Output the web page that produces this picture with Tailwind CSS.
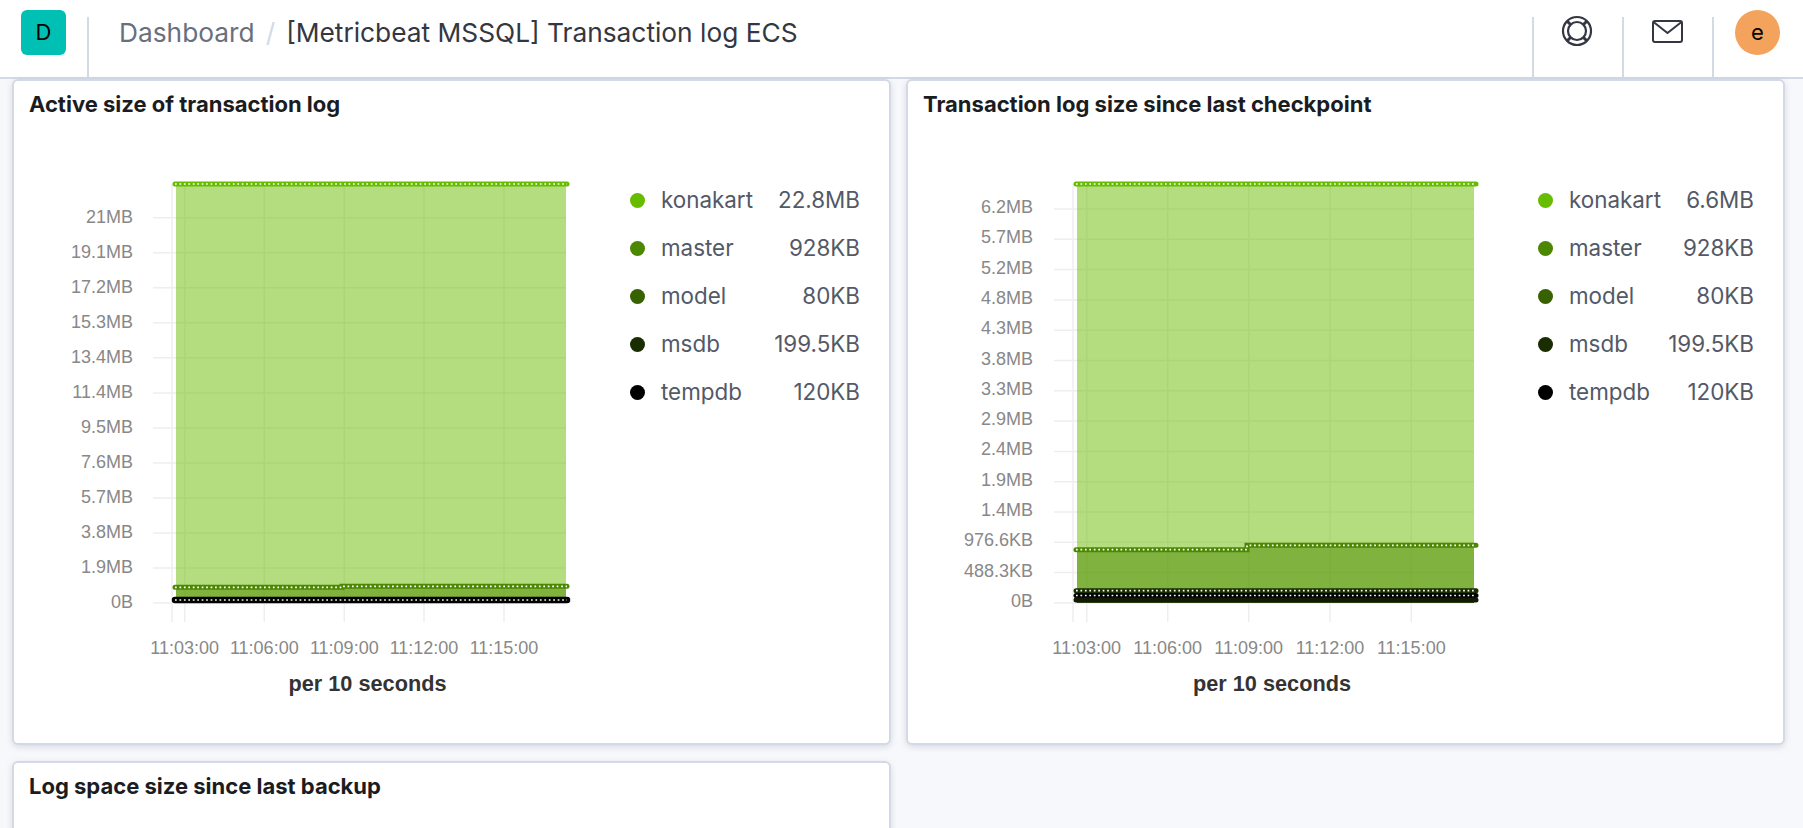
<!DOCTYPE html>
<html lang="en">
  <head>
    <meta charset="utf-8" />
    <title>[Metricbeat MSSQL] Transaction log ECS</title>
    <script src="https://cdn.jsdelivr.net/npm/@tailwindcss/browser@4"></script>
  </head>
  <body class="bg-[#f7f8fc] font-[Inter,sans-serif]">
    <div class="h-screen overflow-hidden">
      <!-- top bar -->
      <header class="flex h-[79px] bg-white border-b-2 border-[#d3dae6]">
        <div class="ml-[21px] mt-[10px] w-[45px] h-[45px] rounded-md bg-[#00bfb3] flex items-center justify-center text-[22px] text-black">D</div>
        <div class="ml-[21px] mt-[17px] w-[2px] bg-[#d3dae6]"></div>
        <nav class="ml-[30px] h-[65px] flex items-center text-[26.3px]">
          <span class="text-[#69707d]">Dashboard</span>
          <span class="mx-[11px] text-[#d3dae6]">/</span>
          <span class="text-[#343741]">[Metricbeat MSSQL] Transaction log ECS</span>
        </nav>
        <div class="ml-auto flex mr-[23px]">
          <div class="mt-[17px] w-[90px] border-l-2 border-[#d3dae6] flex justify-center pr-[2px]">
            <svg class="-mt-[2px]" width="32" height="32" viewBox="0 0 32 32" fill="none" stroke="#343741" stroke-width="2.2">
              <circle cx="16" cy="16" r="14" />
              <circle cx="16" cy="16" r="9" />
              <path stroke-width="3" d="M6.5 6.5l3.5 3.5M25.5 6.5L22 10M6.5 25.5l3.5-3.5M25.5 25.5L22 22" />
            </svg>
          </div>
          <div class="mt-[17px] w-[90px] border-l-2 border-[#d3dae6] flex justify-center pr-[2px]">
            <svg class="mt-[3px]" width="31" height="23" viewBox="0 0 31 23" fill="none" stroke="#343741" stroke-width="2">
              <rect x="1" y="1" width="29" height="21" rx="2" />
              <path d="M1.5 2L15.5 13L29.5 2" />
            </svg>
          </div>
          <div class="mt-[17px] w-[68px] border-l-2 border-[#d3dae6] relative">
            <div class="absolute left-[21px] -top-[7px] w-[45px] h-[45px] rounded-full bg-[#f4a35c] flex items-center justify-center text-[22px] text-black">e</div>
          </div>
        </div>
      </header>

      <main class="grid grid-cols-[879px_879px] gap-x-[15px] gap-y-[16px] pl-[12px]">
        <!-- active size -->
        <section class="h-[666px] bg-white border-2 border-[#d3dae6] rounded-md shadow-[0_2px_6px_rgba(152,162,179,0.35)]">
          <h2 class="h-[46px] pl-[15px] pt-[9px] text-[22px] leading-[28px] font-bold text-[#1a1c21]">Active size of transaction log</h2>
          <div class="flex">
            <svg class="shrink-0 font-['Liberation_Sans',Arial,sans-serif] text-[18px] fill-[#888]" width="606" height="590" viewBox="14 127 606 590">
              <g stroke="#eeeeee" stroke-width="1.5" fill="none">
                <path d="M172 184V622M184.7 184V622M264.3 184V622M344.3 184V622M424 184V622M504 184V622" />
                <path d="M153 217.7H566M153 252.7H566M153 287.8H566M153 322.8H566M153 357.8H566M153 392.9H566M153 427.9H566M153 462.9H566M153 498H566M153 533H566M153 568H566M153 603H566" />
              </g>
              <g text-anchor="end">
                <text x="133" y="223">21MB</text>
                <text x="133" y="258">19.1MB</text>
                <text x="133" y="293">17.2MB</text>
                <text x="133" y="328">15.3MB</text>
                <text x="133" y="363">13.4MB</text>
                <text x="133" y="398">11.4MB</text>
                <text x="133" y="433">9.5MB</text>
                <text x="133" y="468">7.6MB</text>
                <text x="133" y="503">5.7MB</text>
                <text x="133" y="538">3.8MB</text>
                <text x="133" y="573">1.9MB</text>
                <text x="133" y="608">0B</text>
              </g>
              <g text-anchor="middle">
                <text x="184.7" y="654">11:03:00</text>
                <text x="264.3" y="654">11:06:00</text>
                <text x="344.3" y="654">11:09:00</text>
                <text x="424" y="654">11:12:00</text>
                <text x="504" y="654">11:15:00</text>
                <text class="font-bold text-[21.7px] fill-[#333]" x="367.5" y="691">per 10 seconds</text>
              </g>
              <path fill="#68bc00" fill-opacity="0.5" d="M176 184H566V603H176Z" />
              <path fill="#4b8700" fill-opacity="0.5" d="M176 587.3H342V586.3H566V603H176Z" />
              <g fill="none" stroke-width="5" stroke-linecap="round">
                <path stroke="#68bc00" d="M175 184H567" />
                <path stroke="#4b8700" d="M175 587.3H342V586.3H567" />
                <path stroke="#000000" stroke-width="6.5" d="M175 600H567" />
              </g>
              <g fill="none" stroke="#ffffff" stroke-width="1.7" stroke-dasharray="1.7 2.75">
                <path d="M175 184H567" />
                <path d="M175 587.3H342V586.3H567" />
                <path d="M175 600H567" />
              </g>
            </svg>
            <div class="w-[240px] pl-[10px] mt-[49px] text-[22.4px] text-[#535966]">
              <div class="h-[48px] flex items-center"><span class="w-[15px] h-[15px] rounded-full bg-[#68bc00] mr-[16px]"></span>konakart<span class="ml-auto">22.8MB</span></div>
              <div class="h-[48px] flex items-center"><span class="w-[15px] h-[15px] rounded-full bg-[#4b8700] mr-[16px]"></span>master<span class="ml-auto">928KB</span></div>
              <div class="h-[48px] flex items-center"><span class="w-[15px] h-[15px] rounded-full bg-[#386200] mr-[16px]"></span>model<span class="ml-auto">80KB</span></div>
              <div class="h-[48px] flex items-center"><span class="w-[15px] h-[15px] rounded-full bg-[#1a2d00] mr-[16px]"></span>msdb<span class="ml-auto">199.5KB</span></div>
              <div class="h-[48px] flex items-center"><span class="w-[15px] h-[15px] rounded-full bg-black mr-[16px]"></span>tempdb<span class="ml-auto">120KB</span></div>
            </div>
          </div>
        </section>

        <!-- since last checkpoint -->
        <section class="h-[666px] bg-white border-2 border-[#d3dae6] rounded-md shadow-[0_2px_6px_rgba(152,162,179,0.35)]">
          <h2 class="h-[46px] pl-[15px] pt-[9px] text-[22px] leading-[28px] font-bold text-[#1a1c21]">Transaction log size since last checkpoint</h2>
          <div class="flex">
            <svg class="shrink-0 font-['Liberation_Sans',Arial,sans-serif] text-[18px] fill-[#888]" width="617" height="590" viewBox="908 127 617 590">
              <g stroke="#eeeeee" stroke-width="1.5" fill="none">
                <path d="M1073 184V622M1086.7 184V622M1167.7 184V622M1248.7 184V622M1330 184V622M1411.3 184V622" />
                <path d="M1054 209H1474M1054 239.3H1474M1054 269.6H1474M1054 299.9H1474M1054 330.2H1474M1054 360.5H1474M1054 390.8H1474M1054 421.1H1474M1054 451.4H1474M1054 481.7H1474M1054 512H1474M1054 542.3H1474M1054 572.6H1474M1054 603H1474" />
              </g>
              <g text-anchor="end">
                <text x="1033" y="213">6.2MB</text>
                <text x="1033" y="243">5.7MB</text>
                <text x="1033" y="274">5.2MB</text>
                <text x="1033" y="304">4.8MB</text>
                <text x="1033" y="334">4.3MB</text>
                <text x="1033" y="365">3.8MB</text>
                <text x="1033" y="395">3.3MB</text>
                <text x="1033" y="425">2.9MB</text>
                <text x="1033" y="455">2.4MB</text>
                <text x="1033" y="486">1.9MB</text>
                <text x="1033" y="516">1.4MB</text>
                <text x="1033" y="546">976.6KB</text>
                <text x="1033" y="577">488.3KB</text>
                <text x="1033" y="607">0B</text>
              </g>
              <g text-anchor="middle">
                <text x="1086.7" y="654">11:03:00</text>
                <text x="1167.7" y="654">11:06:00</text>
                <text x="1248.7" y="654">11:09:00</text>
                <text x="1330" y="654">11:12:00</text>
                <text x="1411.3" y="654">11:15:00</text>
                <text class="font-bold text-[21.7px] fill-[#333]" x="1272" y="691">per 10 seconds</text>
              </g>
              <path fill="#68bc00" fill-opacity="0.5" d="M1077 184H1474V603H1077Z" />
              <path fill="#4b8700" fill-opacity="0.5" d="M1077 549.7H1247V545.3H1474V603H1077Z" />
              <path fill="#111a05" d="M1077 590H1474V602.5H1077Z" />
              <g fill="none" stroke-width="5" stroke-linecap="round">
                <path stroke="#68bc00" d="M1076 184H1476" />
                <path stroke="#4b8700" d="M1076 549.7H1247V545.3H1476" />
                <path stroke="#1a2d00" d="M1076 590.7H1476" />
                <path stroke="#000000" d="M1076 595.5H1476" />
                <path stroke="#111a05" d="M1076 600H1476" />
              </g>
              <g fill="none" stroke="#ffffff" stroke-width="1.7" stroke-dasharray="1.7 2.75">
                <path d="M1076 184H1476" />
                <path d="M1076 549.7H1247V545.3H1476" />
                <path d="M1076 590.7H1476" />
                <path d="M1076 595.5H1476" />
              </g>
            </svg>
            <div class="w-[229px] pl-[13px] mt-[49px] text-[22.4px] text-[#535966]">
              <div class="h-[48px] flex items-center"><span class="w-[15px] h-[15px] rounded-full bg-[#68bc00] mr-[16px]"></span>konakart<span class="ml-auto">6.6MB</span></div>
              <div class="h-[48px] flex items-center"><span class="w-[15px] h-[15px] rounded-full bg-[#4b8700] mr-[16px]"></span>master<span class="ml-auto">928KB</span></div>
              <div class="h-[48px] flex items-center"><span class="w-[15px] h-[15px] rounded-full bg-[#386200] mr-[16px]"></span>model<span class="ml-auto">80KB</span></div>
              <div class="h-[48px] flex items-center"><span class="w-[15px] h-[15px] rounded-full bg-[#1a2d00] mr-[16px]"></span>msdb<span class="ml-auto">199.5KB</span></div>
              <div class="h-[48px] flex items-center"><span class="w-[15px] h-[15px] rounded-full bg-black mr-[16px]"></span>tempdb<span class="ml-auto">120KB</span></div>
            </div>
          </div>
        </section>

        <!-- since last backup -->
        <section class="h-[666px] bg-white border-2 border-[#d3dae6] rounded-md shadow-[0_2px_6px_rgba(152,162,179,0.35)]">
          <h2 class="h-[46px] pl-[15px] pt-[9px] text-[22px] leading-[28px] font-bold text-[#1a1c21]">Log space size since last backup</h2>
        </section>
      </main>
    </div>
  </body>
</html>
